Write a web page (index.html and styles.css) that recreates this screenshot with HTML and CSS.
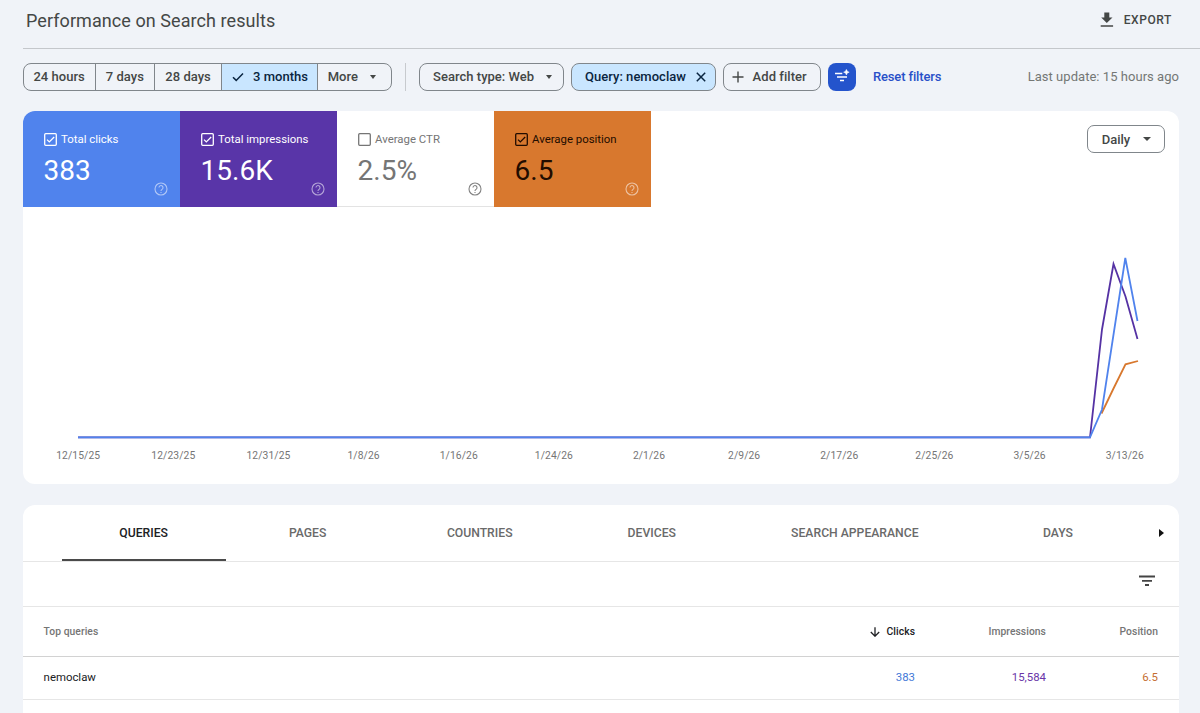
FILE: index.html
```html
<!DOCTYPE html>
<html lang="en">

<head>
    <meta charset="UTF-8">
    <meta name="viewport" content="width=device-width, initial-scale=1.0">
    <title>Performance</title>
    <link rel="stylesheet" href="styles.css">
</head>

<body>
    <header class="header">
        <h1>Performance on Search results</h1>
        <button class="export">
            <svg width="14" height="16" viewBox="0 0 14 16"><path d="M4.3 0.5h5v5h3.2L6.8 11 1.2 5.5h3.1zM.7 13.2h12.4v1.6H.7z" fill="currentColor"/></svg>
            <span>EXPORT</span>
        </button>
    </header>

    <div class="filters">
        <div class="range">
            <button class="range-24h">24 hours</button>
            <button class="range-7d">7 days</button>
            <button class="range-28d">28 days</button>
            <button class="range-3m active">
                <svg width="12" height="10" viewBox="0 0 12 10"><path d="M1 5.2l3.2 3.2L11 1.4" fill="none" stroke="currentColor" stroke-width="1.5"/></svg>
                <span>3 months</span>
            </button>
            <button class="range-more"><span>More</span><i class="caret"></i></button>
        </div>
        <div class="divider"></div>
        <button class="chip chip-type"><span>Search type: Web</span><i class="caret"></i></button>
        <button class="chip chip-query active">
            <span>Query: nemoclaw</span>
            <svg width="10" height="10" viewBox="0 0 10 10"><path d="M.8.8l8.4 8.4M9.2.8L.8 9.2" fill="none" stroke="currentColor" stroke-width="1.5"/></svg>
        </button>
        <button class="chip chip-add">
            <svg width="12" height="12" viewBox="0 0 12 12"><path d="M6 .5v11M.5 6h11" fill="none" stroke="currentColor" stroke-width="1.4"/></svg>
            <span>Add filter</span>
        </button>
        <button class="smart">
            <svg width="28" height="28" viewBox="0 0 28 28">
                <path d="M7 10.5h7.3M9 14h10M12 17.5h4" fill="none" stroke="#fff" stroke-width="1.5"/>
                <path d="M18.4 6.4l.9 1.9 1.9.9-1.9.9-.9 1.9-.9-1.9-1.9-.9 1.9-.9z" fill="#fff" stroke="#fff" stroke-width=".5"/>
            </svg>
        </button>
        <a class="reset" href="#">Reset filters</a>
        <span class="update">Last update: 15 hours ago</span>
    </div>

    <section class="card performance">
        <div class="summary">
            <div class="metrics">
                <div class="metric clicks">
                    <div class="label">
                        <svg width="13" height="13" viewBox="0 0 13 13"><rect x=".7" y=".7" width="11.6" height="11.6" rx="1"/><path d="M3 6.6l2.3 2.3L10.2 4"/></svg>
                        <span>Total clicks</span>
                    </div>
                    <div class="value">383</div>
                    <svg class="help" width="14" height="14" viewBox="0 0 14 14"><circle cx="7" cy="7" r="6"/><path d="M5 5.6a2 2 0 1 1 3.3 1.5C7.5 7.7 7 7.9 7 8.9M7 9.9v1.2"/></svg>
                </div>
                <div class="metric impressions">
                    <div class="label">
                        <svg width="13" height="13" viewBox="0 0 13 13"><rect x=".7" y=".7" width="11.6" height="11.6" rx="1"/><path d="M3 6.6l2.3 2.3L10.2 4"/></svg>
                        <span>Total impressions</span>
                    </div>
                    <div class="value">15.6K</div>
                    <svg class="help" width="14" height="14" viewBox="0 0 14 14"><circle cx="7" cy="7" r="6"/><path d="M5 5.6a2 2 0 1 1 3.3 1.5C7.5 7.7 7 7.9 7 8.9M7 9.9v1.2"/></svg>
                </div>
                <div class="metric ctr">
                    <div class="label">
                        <svg width="13" height="13" viewBox="0 0 13 13"><rect x=".7" y=".7" width="11.6" height="11.6" rx="1"/></svg>
                        <span>Average CTR</span>
                    </div>
                    <div class="value">2.5%</div>
                    <svg class="help" width="14" height="14" viewBox="0 0 14 14"><circle cx="7" cy="7" r="6"/><path d="M5 5.6a2 2 0 1 1 3.3 1.5C7.5 7.7 7 7.9 7 8.9M7 9.9v1.2"/></svg>
                </div>
                <div class="metric position">
                    <div class="label">
                        <svg width="13" height="13" viewBox="0 0 13 13"><rect x=".7" y=".7" width="11.6" height="11.6" rx="1"/><path d="M3 6.6l2.3 2.3L10.2 4"/></svg>
                        <span>Average position</span>
                    </div>
                    <div class="value">6.5</div>
                    <svg class="help" width="14" height="14" viewBox="0 0 14 14"><circle cx="7" cy="7" r="6"/><path d="M5 5.6a2 2 0 1 1 3.3 1.5C7.5 7.7 7 7.9 7 8.9M7 9.9v1.2"/></svg>
                </div>
            </div>
            <button class="daily"><span>Daily</span><i class="caret"></i></button>
        </div>

        <svg class="chart" width="1156" height="240" viewBox="0 0 1156 240">
            <polyline class="line-position" points="1078.5,206.5 1090.5,181.5 1102.5,157.3 1115,154"/>
            <polyline class="line-impressions" points="55,230.3 1067,230.3 1079,122.5 1090.5,57 1102.5,89.5 1114.5,132"/>
            <polyline class="line-clicks" points="55,230.3 1067,230.3 1079,202.5 1102.3,51 1114.5,114"/>
        </svg>
        <div class="axis">
            <span>12/15/25</span>
            <span>12/23/25</span>
            <span>12/31/25</span>
            <span>1/8/26</span>
            <span>1/16/26</span>
            <span>1/24/26</span>
            <span>2/1/26</span>
            <span>2/9/26</span>
            <span>2/17/26</span>
            <span>2/25/26</span>
            <span>3/5/26</span>
            <span>3/13/26</span>
        </div>
    </section>

    <section class="card report">
        <nav class="tabs">
            <a class="active" href="#queries">QUERIES</a>
            <a href="#pages">PAGES</a>
            <a href="#countries">COUNTRIES</a>
            <a href="#devices">DEVICES</a>
            <a href="#appearance">SEARCH APPEARANCE</a>
            <a href="#days">DAYS</a>
            <i class="tabs-next"></i>
        </nav>
        <div class="tools">
            <svg width="16" height="12" viewBox="0 0 16 12"><path d="M0 1.5h16M3 5.8h10M6 10h4" fill="none" stroke="#444" stroke-width="1.8"/></svg>
        </div>
        <div class="row head">
            <span class="query">Top queries</span>
            <span class="sorted">
                <svg width="10" height="10" viewBox="0 0 10 10"><path d="M5 .3v8.7M.8 5L5 9.2 9.2 5" fill="none" stroke="currentColor" stroke-width="1.3"/></svg>
                Clicks
            </span>
            <span>Impressions</span>
            <span>Position</span>
        </div>
        <div class="row">
            <span class="query">nemoclaw</span>
            <span class="num-clicks">383</span>
            <span class="num-impressions">15,584</span>
            <span class="num-position">6.5</span>
        </div>
    </section>
</body>

</html>
```
FILE: styles.css
```css
* {
    box-sizing: border-box;
}

body {
    margin: 0;
    height: 713px;
    overflow: hidden;
    background: #f0f3f8;
    color: #444746;
    font-family: Roboto, "Liberation Sans", sans-serif;
    font-size: 13px;
}

button {
    margin: 0;
    padding: 0;
    border: none;
    background: none;
    color: inherit;
    font: inherit;
    letter-spacing: inherit;
    white-space: nowrap;
}

a {
    text-decoration: none;
}

svg {
    display: block;
    flex: none;
}

.caret {
    border: 3.5px solid transparent;
    border-top: 4px solid currentColor;
    border-bottom: none;
}

.header {
    display: flex;
    justify-content: space-between;
    height: 49px;
    margin-left: 23px;
    padding: 0 28px 8px 3px;
    align-items: center;
    border-bottom: 1px solid #c4c7cb;
}
.header h1 {
    margin: 0;
    padding-top: 1px;
    font-size: 18px;
    font-weight: 400;
    letter-spacing: 0.07px;
}
.export {
    display: flex;
    align-items: center;
    gap: 10px;
    font-size: 12px;
    font-weight: 500;
    letter-spacing: 0.6px;
}

.filters {
    display: flex;
    align-items: center;
    height: 28px;
    margin: 14px 21px 20px 22.6px;
    font-weight: 500;
    letter-spacing: 0.02px;
}
.range {
    display: flex;
    width: 369px;
    height: 28px;
    border: 1px solid #80868b;
    border-radius: 8px;
    overflow: hidden;
}
.range button {
    display: flex;
    align-items: center;
    justify-content: center;
    padding-bottom: 1px;
    border-right: 1px solid #80868b;
}
.range .range-24h {
    width: 72px;
}
.range .range-7d {
    width: 59.6px;
}
.range .range-28d {
    width: 66.8px;
}
.range .range-3m {
    width: 96px;
    padding-left: 1px;
    gap: 9px;
}
.range .range-more {
    flex: 1;
    gap: 12px;
    padding-right: 5px;
    border-right: none;
}
.range .active,
.chip.active {
    background: #c9e6ff;
    color: #0a2540;
}
.divider {
    width: 1px;
    height: 28px;
    margin: 0 13px;
    background: #c7cace;
}
.chip {
    display: flex;
    align-items: center;
    height: 28px;
    margin-right: 7px;
    padding-bottom: 1px;
    border: 1px solid #80868b;
    border-radius: 8px;
}
.chip-type {
    width: 145px;
    padding-left: 13.5px;
    gap: 12px;
}
.chip-query {
    width: 145px;
    padding-left: 13.5px;
    gap: 10.5px;
}
.chip-add {
    width: 98px;
    padding-left: 8px;
    gap: 9px;
    letter-spacing: 0.05px;
}
.smart {
    width: 28px;
    height: 28px;
    border-radius: 8px;
    background: #2454cc;
}
.reset {
    margin-left: 17.4px;
    padding-bottom: 1px;
    color: #2850c8;
    letter-spacing: -0.15px;
}
.update {
    margin-left: auto;
    padding-bottom: 1px;
    color: #747775;
    font-weight: 400;
    letter-spacing: 0.04px;
}

.card {
    margin: 0 21px 0 22.6px;
    border-radius: 12px;
    background: #fff;
    overflow: hidden;
}
.performance {
    height: 373px;
}
.summary {
    display: flex;
    justify-content: space-between;
}
.metrics {
    display: flex;
}
.metric {
    position: relative;
    width: 157px;
    height: 96px;
    padding: 21px 0 0 21px;
}
.metric .label {
    display: flex;
    align-items: center;
    gap: 4.5px;
    height: 14px;
    font-size: 11.4px;
}
.metric .label svg {
    fill: none;
    stroke: currentColor;
    stroke-width: 1.3;
}
.metric .value {
    margin-top: 8px;
    font-size: 28px;
    line-height: 34px;
}
.metric .help {
    position: absolute;
    right: 11.5px;
    bottom: 11px;
    fill: none;
    stroke: currentColor;
    stroke-width: 1.1;
    opacity: 0.55;
}
.clicks {
    background: #5083ed;
    color: #fff;
}
.impressions {
    background: #5935a8;
    color: #fff;
}
.ctr {
    border-bottom: 1px solid #e3e3e3;
    color: #757575;
}
.ctr .help {
    bottom: 10px;
    opacity: 0.9;
}
.position {
    background: #d8782e;
    color: #220c00;
}
.position .help {
    color: #fff;
}
.daily {
    display: flex;
    align-items: center;
    justify-content: center;
    gap: 13px;
    width: 78px;
    height: 28px;
    margin: 14px 14px 0 0;
    padding-left: 1px;
    border: 1px solid #80868b;
    border-radius: 7px;
    font-weight: 500;
}
.daily .caret {
    border-width: 4px 4px 0;
}

.chart polyline {
    fill: none;
    stroke-width: 1.8;
}
.chart .line-clicks {
    stroke: #5083ed;
}
.chart .line-impressions {
    stroke: #5532a4;
}
.chart .line-position {
    stroke: #d8782e;
}
.axis {
    display: grid;
    grid-template-columns: repeat(12, 95.15px);
    margin-left: 8px;
    padding-top: 2px;
    color: #757575;
    font-size: 10.3px;
    letter-spacing: 0.1px;
    text-align: center;
}

.report {
    height: 230px;
    margin-top: 21px;
}
.tabs {
    display: flex;
    height: 57px;
    padding-left: 39px;
    border-bottom: 1px solid #e6e6e6;
}
.tabs a {
    min-width: 164px;
    height: 56px;
    padding: 0 57.3px;
    border-bottom: 2px solid transparent;
    color: #6a6a6a;
    font-size: 12.2px;
    font-weight: 500;
    line-height: 57px;
    text-align: center;
    white-space: nowrap;
}
.tabs a.active {
    border-color: #4a4a4a;
    color: #202124;
}
.tabs-next {
    align-self: center;
    margin-left: auto;
    margin-right: 15px;
    border: 4px solid transparent;
    border-left: 5px solid #111;
    border-right: none;
}
.tools {
    display: flex;
    justify-content: flex-end;
    height: 45px;
    padding: 13px 24px 0 0;
    border-bottom: 1px solid #e6e6e6;
}
.row {
    display: grid;
    grid-template-columns: 1fr 131px 131px 112px;
    align-items: center;
    height: 43px;
    padding: 0 21px 2px;
    border-bottom: 1px solid #e6e6e6;
    font-size: 11.4px;
    text-align: right;
}
.row .query {
    text-align: left;
    color: #202124;
}
.row.head {
    height: 50px;
    padding-bottom: 0;
    border-color: #d2d2d2;
    color: #757575;
    font-size: 10.3px;
    font-weight: 500;
    letter-spacing: 0.07px;
}
.row.head .query {
    color: #757575;
}
.row .sorted {
    display: flex;
    align-items: center;
    justify-content: flex-end;
    gap: 6.5px;
    color: #202124;
}
.num-clicks {
    color: #4479d8;
}
.num-impressions {
    color: #6a35a8;
}
.num-position {
    color: #c56e33;
}
```
